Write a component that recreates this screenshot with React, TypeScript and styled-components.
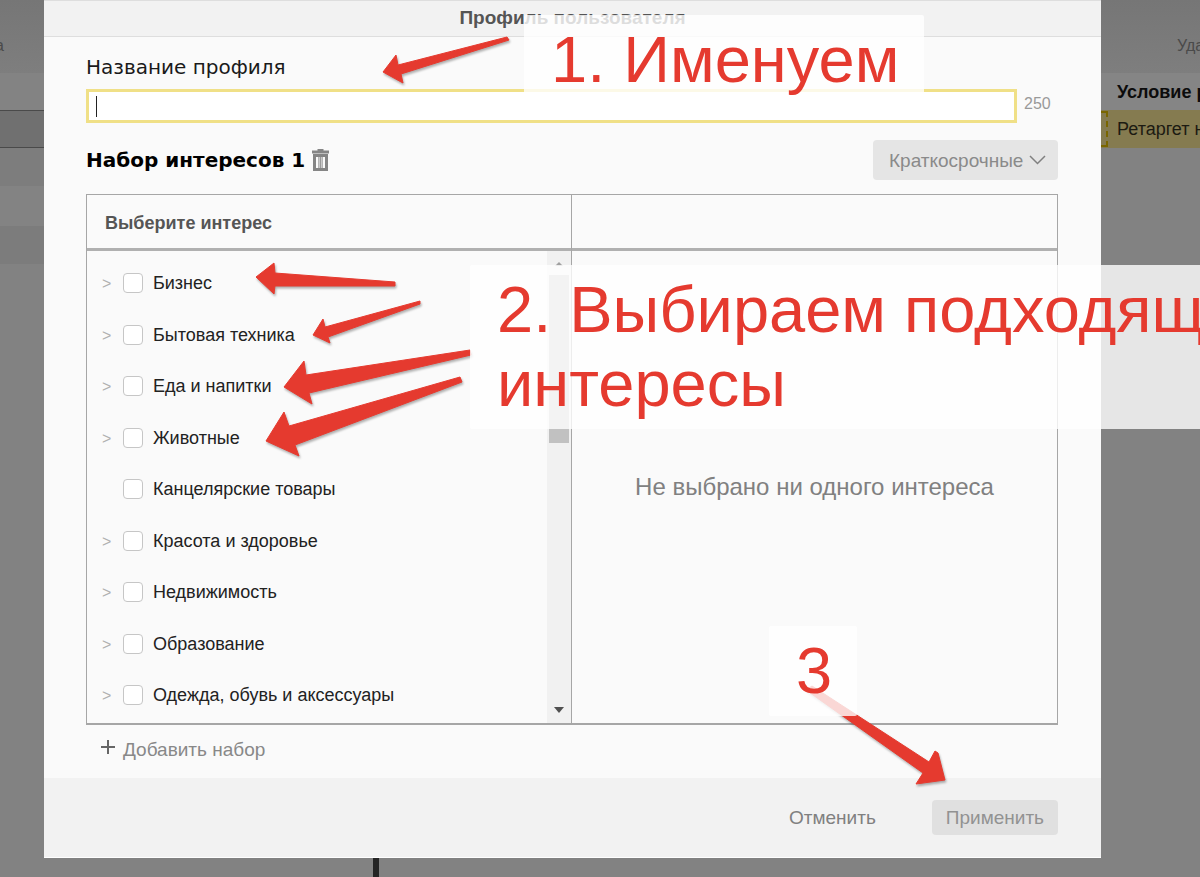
import React from "react";
import styled, { createGlobalStyle } from "styled-components";

const sans = `"Liberation Sans", Arial, sans-serif`;
const wide = `"DejaVu Sans", Verdana, sans-serif`;

const GlobalStyle = createGlobalStyle`
  *, *::before, *::after { box-sizing: border-box; }
  body { margin: 0; background: #828282; font-family: ${sans}; }
  button, input, select { font: inherit; color: inherit; margin: 0; }
  h1, h2, p, ul { margin: 0; padding: 0; }
`;

const Page = styled.div`
  position: relative;
  display: grid;
  grid-template-columns: 44px minmax(0, 1fr) 99px;
  min-height: 100vh;
  overflow: hidden;
  background: #828282;
`;

const Side = styled.aside`
  display: flex;
  flex-direction: column;
  overflow: hidden;
  white-space: nowrap;
`;

const SideHead = styled.div<{ $end?: boolean }>`
  height: 73px;
  padding: ${(p) => (p.$end ? "36px 0 0 76px" : "36px 40px 0 0")};
  display: flex;
  justify-content: ${(p) => (p.$end ? "flex-start" : "flex-end")};
  font-size: 16px;
  line-height: 20px;
  color: #4a4a4a;
  background: linear-gradient(#767676, #7e7e7e);
`;

const Band = styled.div<{ $h: number; $bg: string; $ruled?: boolean }>`
  height: ${(p) => p.$h}px;
  background: ${(p) => p.$bg};
  border: solid #4a4a4a;
  border-width: ${(p) => (p.$ruled ? "1px 0" : "0")};
`;

const SideTitle = styled.div`
  height: 37px;
  padding-left: 16px;
  font-size: 18px;
  font-weight: bold;
  line-height: 38px;
  color: #0c0c0c;
  background: #858585;
`;

const SideRow = styled.div`
  display: flex;
  align-items: center;
  gap: 9px;
  height: 38px;
  font-size: 18px;
  color: #1c1a12;
  background: #857b50;
`;

const Marker = styled.svg`
  flex: none;
  width: 7px;
  height: 38px;
`;

const Center = styled.div`
  position: relative;
  display: flex;
  flex-direction: column;
`;

const PageDivider = styled.div`
  flex: 1;
  width: 6px;
  min-height: 19px;
  margin-left: 329px;
  background: #242424;
`;

const Dialog = styled.section`
  display: flex;
  flex-direction: column;
  background: #fafafa;
  border-bottom: 1px solid #fff;
`;

const DialogHead = styled.header`
  height: 37px;
  border: 1px solid #dedede;
  border-width: 1px 0;
  background: #f2f2f2;
  text-align: center;
`;

const DialogTitle = styled.h1`
  font-size: 19px;
  line-height: 34px;
  color: #555;
`;

const Body = styled.div`
  padding: 18px 43px 16px 42px;
`;

const FieldLabel = styled.label`
  display: block;
  font-family: ${wide};
  font-size: 20px;
  line-height: 24px;
  color: #1a1a1a;
`;

const Field = styled.div`
  display: flex;
  align-items: center;
  gap: 7px;
  margin-top: 10px;
`;

const InputFrame = styled.div`
  flex: 1;
  display: flex;
  align-items: center;
  height: 34px;
  padding: 0 7px;
  border: 3px solid #f0e087;
  background: #fff;
`;

const Caret = styled.span`
  width: 1px;
  height: 21px;
  background: #222;
`;

const NameInput = styled.input`
  flex: 1;
  height: 26px;
  border: 0;
  outline: 0;
  background: transparent;
  font-size: 18px;
`;

const Counter = styled.span`
  width: 34px;
  padding-bottom: 4px;
  font-size: 16px;
  line-height: 20px;
  color: #999;
`;

const SetBar = styled.div`
  display: flex;
  align-items: center;
  justify-content: space-between;
  margin-top: 17px;
  height: 40px;
`;

const SetName = styled.div`
  display: flex;
  align-items: center;
  gap: 7px;
`;

const SetTitle = styled.h2`
  font-family: ${wide};
  font-size: 20px;
  line-height: 24px;
  color: #000;
`;

const IconButton = styled.button`
  display: flex;
  padding: 0;
  border: 0;
  background: none;
`;

const SelectWrap = styled.div`
  position: relative;
  width: 185px;
  height: 40px;
  color: #8a8a8a;
`;

const TermSelect = styled.select`
  appearance: none;
  width: 100%;
  height: 100%;
  padding: 0 30px 0 16px;
  border: 0;
  border-radius: 4px;
  background: #e5e5e5;
  font-size: 19px;
`;

const SelectArrow = styled.svg`
  position: absolute;
  top: 14px;
  right: 12px;
  pointer-events: none;
`;

const Picker = styled.div`
  display: grid;
  grid-template-columns: calc(50% - 1px) minmax(0, 1fr);
  margin-top: 14px;
  border: 1px solid #a6a6a6;
  border-bottom-width: 2px;
`;

const Pane = styled.div`
  display: flex;
  flex-direction: column;
  & + & { border-left: 1px solid #a6a6a6; }
`;

const PaneHead = styled.div`
  height: 56px;
  padding-left: 18px;
  border-bottom: 3px solid #b0b0b0;
  font-size: 18px;
  font-weight: bold;
  line-height: 56px;
  color: #555;
`;

const ListArea = styled.div`
  display: flex;
  height: 472px;
`;

const InterestList = styled.ul`
  flex: 1;
  padding-top: 7px;
  list-style: none;
`;

const InterestRow = styled.li`
  display: grid;
  grid-template-columns: 21px 1fr;
  align-items: center;
  height: 50px;
  margin-bottom: 2px;
  padding-left: 15px;
  &:nth-child(even) { margin-bottom: 1px; }
`;

const Expand = styled.button`
  grid-column: 1;
  padding: 2px 0 0;
  border: 0;
  background: none;
  font-size: 16px;
  line-height: 20px;
  text-align: left;
  color: #b0b0b0;
`;

const Choice = styled.label`
  grid-column: 2;
  display: flex;
  align-items: center;
  gap: 10px;
  font-size: 18px;
  line-height: 22px;
  color: #222;
`;

const Check = styled.input`
  appearance: none;
  width: 20px;
  height: 20px;
  border: 1px solid #c6c6c6;
  border-radius: 4px;
  background: #fff;
`;

const ScrollTrack = styled.div`
  display: flex;
  flex-direction: column;
  align-items: center;
  width: 24px;
  background: #f1f1f1;
`;

const ScrollThumb = styled.div`
  width: 20px;
  height: 168px;
  margin-bottom: auto;
  background: #c1c1c1;
`;

const Empty = styled.p`
  flex: 1;
  display: flex;
  align-items: center;
  justify-content: center;
  font-size: 24px;
  line-height: 28px;
  color: #808080;
`;

const AddSet = styled.button`
  display: flex;
  align-items: center;
  gap: 8px;
  margin-top: 13px;
  padding: 0 0 0 15px;
  border: 0;
  background: none;
  font-size: 19px;
  line-height: 24px;
  color: #888;
`;

const Foot = styled.footer`
  display: flex;
  align-items: center;
  justify-content: flex-end;
  gap: 38px;
  height: 79px;
  padding: 0 43px 0 42px;
  background: #f2f2f2;
`;

const FootButton = styled.button<{ $filled?: boolean }>`
  height: 35px;
  padding: 0 ${(p) => (p.$filled ? 14 : 18)}px;
  border: 0;
  border-radius: 4px;
  background: ${(p) => (p.$filled ? "#e0e0e0" : "none")};
  font-size: 19px;
  color: ${(p) => (p.$filled ? "#929292" : "#808080")};
`;

const Arrows = styled.svg`
  position: absolute;
  top: 0;
  left: 0;
  pointer-events: none;
  filter: drop-shadow(1px 2px 1px rgba(0, 0, 0, 0.3));
`;

const Note = styled.div<{ $x: number; $y: number }>`
  position: absolute;
  left: ${(p) => p.$x}px;
  top: ${(p) => p.$y}px;
  padding: 8px 25px 8px 27px;
  border-radius: 2px;
  background: rgba(255, 255, 255, 0.8);
  font-size: 65px;
  line-height: 74px;
  white-space: nowrap;
  color: #e53a2f;
`;

const interests = [
  { name: "Бизнес", nested: true },
  { name: "Бытовая техника", nested: true },
  { name: "Еда и напитки", nested: true },
  { name: "Животные", nested: true },
  { name: "Канцелярские товары", nested: false },
  { name: "Красота и здоровье", nested: true },
  { name: "Недвижимость", nested: true },
  { name: "Образование", nested: true },
  { name: "Одежда, обувь и аксессуары", nested: true },
];

const arrows = [
  "383,72 396,55 398,65 507,37 509,40 401,74 403,83",
  "256,277 274,263 275,273 395,282 395,286 275,286 274,294",
  "313,335 323,319 325,327 420,301 420,304 328,337 330,343",
  "284,387 304,361 306,375 470,350 471,355 309,393 312,404",
  "266,441 284,412 289,426 460,377 462,382 295,445 299,456",
  "806,690 812,686 929,762 935,751 938,753 945,780 916,784 923,773",
];

export default function App() {
  return (
    <>
      <GlobalStyle />
      <Page>
        <Side>
          <SideHead>а</SideHead>
          <Band $h={37} $bg="#838383" />
          <Band $h={38} $bg="#707070" $ruled />
          <Band $h={38} $bg="#7d7d7d" />
          <Band $h={40} $bg="#838383" />
          <Band $h={38} $bg="#7c7c7c" />
        </Side>
        <Center>
          <Dialog role="dialog" aria-labelledby="dialog-title">
            <DialogHead>
              <DialogTitle id="dialog-title">Профиль пользователя</DialogTitle>
            </DialogHead>
            <Body>
              <FieldLabel htmlFor="profile-name">Название профиля</FieldLabel>
              <Field>
                <InputFrame>
                  <Caret />
                  <NameInput id="profile-name" type="text" maxLength={250} />
                </InputFrame>
                <Counter>250</Counter>
              </Field>
              <SetBar>
                <SetName>
                  <SetTitle>Набор интересов 1</SetTitle>
                  <IconButton type="button" aria-label="Удалить набор">
                    <svg width="17" height="22" viewBox="0 0 17 22" fill="none" stroke="#858585">
                      <path d="M5.500 1h6" strokeWidth="2" />
                      <path d="M0 3h17" strokeWidth="3" />
                      <path d="M2.500 6.500h12v14h-12z" strokeWidth="3" />
                      <path d="M6.500 8v11M10.500 8v11" stroke="#b5b5b5" strokeWidth="1" />
                      <path d="M8.500 8v11" stroke="#999" strokeWidth="2" />
                    </svg>
                  </IconButton>
                </SetName>
                <SelectWrap>
                  <TermSelect aria-label="Срок интересов">
                    <option>Краткосрочные</option>
                  </TermSelect>
                  <SelectArrow width="17" height="12" viewBox="0 0 17 12" fill="none">
                    <path d="M1 2l7.500 7.500L16 2" stroke="#808080" strokeWidth="1.500" />
                  </SelectArrow>
                </SelectWrap>
              </SetBar>
              <Picker>
                <Pane>
                  <PaneHead>Выберите интерес</PaneHead>
                  <ListArea>
                    <InterestList>
                      {interests.map((item) => (
                        <InterestRow key={item.name}>
                          {item.nested && (
                            <Expand type="button" aria-label={"Раскрыть: " + item.name}>
                              &gt;
                            </Expand>
                          )}
                          <Choice>
                            <Check type="checkbox" />
                            {item.name}
                          </Choice>
                        </InterestRow>
                      ))}
                    </InterestList>
                    <ScrollTrack>
                      <svg width="24" height="24" viewBox="0 0 24 24">
                        <path d="M8 15l4-4 4 4z" fill="#a0a0a0" />
                      </svg>
                      <ScrollThumb />
                      <svg width="24" height="24" viewBox="0 0 24 24">
                        <path d="M7 8h10l-5 6z" fill="#505050" />
                      </svg>
                    </ScrollTrack>
                  </ListArea>
                </Pane>
                <Pane>
                  <PaneHead />
                  <Empty>Не выбрано ни одного интереса</Empty>
                </Pane>
              </Picker>
              <AddSet type="button">
                <svg width="14" height="20" viewBox="0 0 14 20">
                  <path d="M7 0v14M0 7h14" stroke="#666" strokeWidth="2" />
                </svg>
                Добавить набор
              </AddSet>
            </Body>
            <Foot>
              <FootButton type="button">Отменить</FootButton>
              <FootButton type="button" $filled>
                Применить
              </FootButton>
            </Foot>
          </Dialog>
          <PageDivider />
        </Center>
        <Side>
          <SideHead $end>Удалить</SideHead>
          <SideTitle>Условие ретаргетинга</SideTitle>
          <SideRow>
            <Marker viewBox="0 0 7 38">
              <path
                d="M0 2h6v5M6 11v6M6 21v6M6 31v5H0"
                fill="none"
                stroke="#7a6600"
                strokeWidth="2"
              />
            </Marker>
            Ретаргет на
          </SideRow>
        </Side>
        <Arrows width="1000" height="800" viewBox="0 0 1000 800">
          {arrows.map((points) => (
            <polygon key={points} points={points} fill="#e53a2f" stroke="#e53a2f" strokeLinejoin="round" />
          ))}
        </Arrows>
        <Note $x={524} $y={15}>1. Именуем</Note>
        <Note $x={470} $y={265}>
          2. Выбираем подходящие
          <br />
          интересы
        </Note>
        <Note $x={769} $y={626}>3</Note>
      </Page>
    </>
  );
}
